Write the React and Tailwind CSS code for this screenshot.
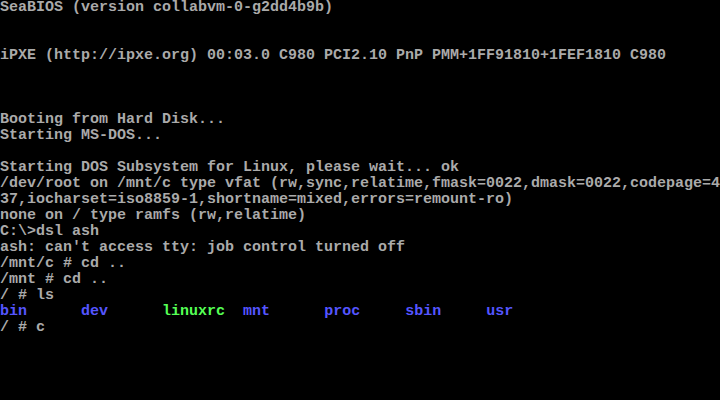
import React from 'react';

const lines = [
    'SeaBIOS (version collabvm-0-g2dd4b9b)',
    '',
    '',
    'iPXE (http://ipxe.org) 00:03.0 C980 PCI2.10 PnP PMM+1FF91810+1FEF1810 C980',
    '',
    '',
    '',
    'Booting from Hard Disk...',
    'Starting MS-DOS...',
    '',
    'Starting DOS Subsystem for Linux, please wait... ok',
    '/dev/root on /mnt/c type vfat (rw,sync,relatime,fmask=0022,dmask=0022,codepage=4',
    '37,iocharset=iso8859-1,shortname=mixed,errors=remount-ro)',
    'none on / type ramfs (rw,relatime)',
    'C:\\>dsl ash',
    "ash: can't access tty: job control turned off",
    '/mnt/c # cd ..',
    '/mnt # cd ..',
    '/ # ls',
];

const listing = [
    { name: 'bin', pad: '      ', color: 'text-[#5555ff]' },
    { name: 'dev', pad: '      ', color: 'text-[#5555ff]' },
    { name: 'linuxrc', pad: '  ', color: 'text-[#55ff55]' },
    { name: 'mnt', pad: '      ', color: 'text-[#5555ff]' },
    { name: 'proc', pad: '     ', color: 'text-[#5555ff]' },
    { name: 'sbin', pad: '     ', color: 'text-[#5555ff]' },
    { name: 'usr', pad: '', color: 'text-[#5555ff]' },
];

const App = () => {
    return (
        <div className="w-[720px] h-[400px] bg-black overflow-hidden text-[#aaaaaa] font-['Liberation_Mono',monospace] font-bold text-[15px] leading-[16px]">
            {lines.map((line, i) => (
                <div key={i} className="h-4 whitespace-pre">{line}</div>
            ))}
            <div className="h-4 whitespace-pre">
                {listing.map((item) => (
                    <span key={item.name}>
                        <span className={item.color}>{item.name}</span>
                        {item.pad}
                    </span>
                ))}
            </div>
            <div className="h-4 whitespace-pre">/ # c</div>
        </div>
    );
};

export default App;
